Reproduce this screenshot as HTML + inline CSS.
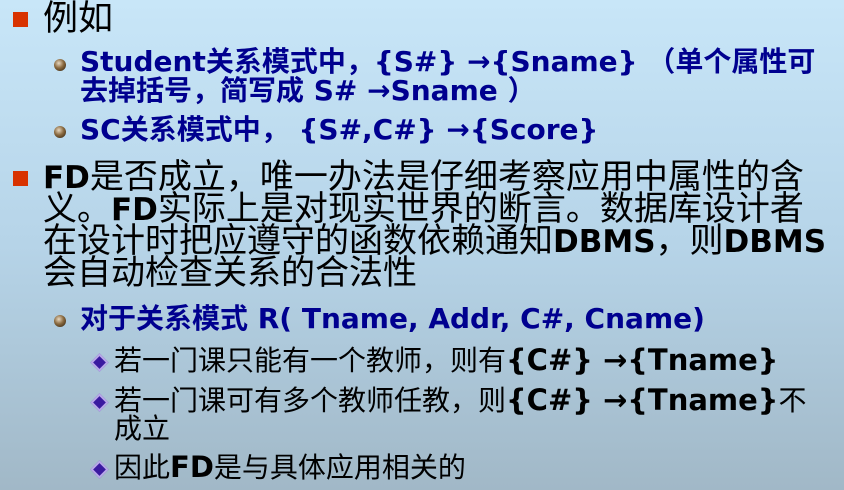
<!DOCTYPE html>
<html><head><meta charset="utf-8"><style>
body{margin:0;width:844px;height:490px;overflow:hidden;background:linear-gradient(#c8e6f8,#b6d4e8 50%,#a1b8c7);position:relative;font-family:"DejaVu Sans","Noto Sans CJK SC",sans-serif}
.l{position:absolute;white-space:nowrap}
.big{font-size:34px;line-height:31px;color:#000}
.big b{font-size:31px}
.blue{font-size:28px;line-height:28px;color:#00008f;font-weight:bold}
.blk{font-size:28px;line-height:28px;color:#000}
.blk b{font-size:29px}
b{font-weight:bold}
.sq{position:absolute;width:15px;height:15px;background:#d83200}
.ball{position:absolute;width:12px;height:12px;border-radius:50%;background:radial-gradient(circle at 40% 35%,#e8d8c0,#8a6a40 45%,#2a1a08)}
.dia{position:absolute;width:9px;height:9px;transform:rotate(45deg);background:#3a1aa0;border:2px solid #b8a8e8}
</style></head><body>
<div class="sq" style="left:13px;top:12px"></div>
<div class="l big" style="left:43px;top:4px;font-size:35px">例如</div>
<div class="ball" style="left:54px;top:59px"></div>
<div class="l blue" style="left:80px;top:48px">Student关系模式中，{S#} →{Sname} （单个属性可</div>
<div class="l blue" style="left:80px;top:77px">去掉括号，简写成 S# →Sname ）</div>
<div class="ball" style="left:54px;top:126px"></div>
<div class="l blue" style="left:80px;top:116px">SC关系模式中， {S#,C#} →{Score}</div>
<div class="sq" style="left:13px;top:171px"></div>
<div class="l big" style="left:43px;top:162px"><b>FD</b>是否成立，唯一办法是仔细考察应用中属性的含<br>义。<b>FD</b>实际上是对现实世界的断言。数据库设计者<br>在设计时把应遵守的函数依赖通知<b>DBMS</b>，则<b>DBMS</b><br>会自动检查关系的合法性</div>
<div class="ball" style="left:54px;top:315px"></div>
<div class="l blue" style="left:80px;top:305px">对于关系模式 R( Tname, Addr, C#, Cname)</div>
<div class="dia" style="left:93px;top:356px"></div>
<div class="l blk" style="left:114px;top:346px">若一门课只能有一个教师，则有<b>{C#} →{Tname}</b></div>
<div class="dia" style="left:93px;top:396px"></div>
<div class="l blk" style="left:114px;top:386px">若一门课可有多个教师任教，则<b>{C#} →{Tname}</b>不<br>成立</div>
<div class="dia" style="left:93px;top:463px"></div>
<div class="l blk" style="left:114px;top:453px">因此<b>FD</b>是与具体应用相关的</div>
</body></html>
